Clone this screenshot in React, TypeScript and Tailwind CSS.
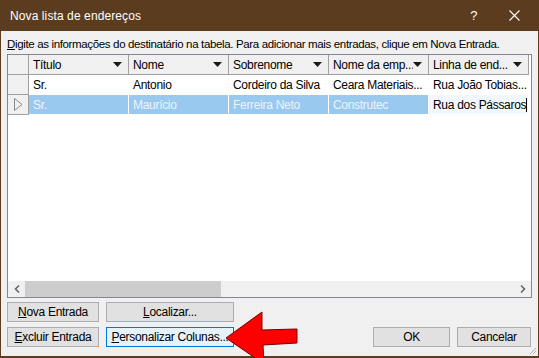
import React from "react";

const cols = [
  "Título",
  "Nome",
  "Sobrenome",
  "Nome da emp...",
  "Linha de end...",
];

const rows = [
  ["Sr.", "Antonio", "Cordeiro da Silva", "Ceara Materiais...", "Rua João Tobias..."],
  ["Sr.", "Maurício", "Ferreira Neto", "Construtec", "Rua dos Pássaros"],
];

function DownArrow() {
  return (
    <svg width="9" height="5" viewBox="0 0 9 5" className="shrink-0">
      <polygon points="0,0 9,0 4.5,5" fill="#1a1a1a" />
    </svg>
  );
}

function Btn({
  label,
  u,
  className = "",
  focused = false,
}: {
  label: string;
  u: number;
  className?: string;
  focused?: boolean;
}) {
  return (
    <button
      type="button"
      className={
        "h-[20px] flex items-center justify-center border text-[12px] tracking-[-0.3px] text-black leading-none whitespace-nowrap " +
        (focused ? "border-[#0078d7] bg-[#e5f1fb] " : "border-[#adadad] bg-[#e1e1e1] ") +
        className
      }
    >
      {u >= 0 ? (
        <span>
          {label.slice(0, u)}
          <span className="underline">{label[u]}</span>
          {label.slice(u + 1)}
        </span>
      ) : (
        label
      )}
    </button>
  );
}

export default function App() {
  return (
    <div className="relative w-[539px] h-[358px] bg-[#5b3c1e] flex flex-col font-['Liberation_Sans',Arial,sans-serif] overflow-hidden">
      {/* title bar */}
      <div className="h-[31px] flex items-center text-white text-[12px] tracking-[0.1px] pl-[10px] shrink-0">
        <span className="flex-1">Nova lista de endereços</span>
        <span className="w-[20px] text-center text-[13px] mr-[25px]">?</span>
        <svg width="11" height="11" viewBox="0 0 11 11" className="mr-[19px]">
          <path d="M0.5 0.5 L10.5 10.5 M10.5 0.5 L0.5 10.5" stroke="#fff" strokeWidth="1.1" />
        </svg>
      </div>

      {/* client area */}
      <div className="flex-1 mx-[1px] mb-[2px] bg-[#f0f0f0] flex flex-col pl-[6px] text-[12px] tracking-[-0.3px] text-black">
        <div className="h-[23px] pt-[6px] leading-[14px] text-[11.5px] tracking-[-0.35px] whitespace-nowrap">
          <span className="underline">D</span>igite as informações do destinatário na tabela. Para adicionar mais entradas, clique em Nova Entrada.
        </div>

        {/* grid */}
        <div className="w-[525px] h-[244px] border border-[#828790] bg-white flex flex-col">
          <div className="flex h-[20px] shrink-0">
            <div className="w-[21px] bg-[#f0f0f0] border-r border-b border-[#a0a0a0]" />
            {cols.map((c) => (
              <div
                key={c}
                className="w-[100px] bg-[#f0f0f0] border-r border-b border-[#a0a0a0] flex items-center pl-[4px] pr-[6px]"
              >
                <span className="flex-1 whitespace-nowrap overflow-hidden">{c}</span>
                <DownArrow />
              </div>
            ))}
          </div>

          {rows.map((r, i) => {
            const sel = i === 1;
            return (
              <div key={i} className="flex h-[20px] shrink-0">
                <div className="w-[21px] bg-[#f0f0f0] border-r border-b border-[#a0a0a0] flex items-center justify-center">
                  {sel && (
                    <svg width="9" height="13" viewBox="0 0 9 13">
                      <polygon points="0.5,0.5 8,6.5 0.5,12.5" fill="none" stroke="#8a8a8a" />
                    </svg>
                  )}
                </div>
                {r.map((v, j) => {
                  const editing = sel && j === 4;
                  return (
                    <div
                      key={j}
                      className={
                        "w-[100px] border-r border-b border-white flex items-center pl-[4px] whitespace-nowrap overflow-hidden " +
                        (editing
                          ? "bg-[#f1f7fd] text-black"
                          : sel
                          ? "bg-[#99c9ef] text-[#eef3f8]"
                          : "bg-white text-black")
                      }
                    >
                      {v}
                      {editing && <span className="inline-block w-[1px] h-[14px] bg-black" />}
                    </div>
                  );
                })}
              </div>
            );
          })}

          <div className="flex-1" />

          {/* horizontal scrollbar */}
          <div className="h-[16px] bg-[#f0f0f0] flex items-center shrink-0">
            <div className="w-[17px] flex items-center justify-center">
              <svg width="6" height="8" viewBox="0 0 6 8">
                <path d="M5 0.5 L1.5 4 L5 7.5" fill="none" stroke="#606060" strokeWidth="1.5" />
              </svg>
            </div>
            <div className="w-[196px] h-full bg-[#cdcdcd]" />
            <div className="flex-1" />
            <div className="w-[17px] flex items-center justify-center">
              <svg width="6" height="8" viewBox="0 0 6 8">
                <path d="M1 0.5 L4.5 4 L1 7.5" fill="none" stroke="#606060" strokeWidth="1.5" />
              </svg>
            </div>
          </div>
        </div>

        {/* buttons */}
        <div className="flex gap-[7px] mt-[4px]">
          <Btn label="Nova Entrada" u={0} className="w-[92px]" />
          <Btn label="Localizar..." u={0} className="w-[128px]" />
        </div>
        <div className="flex mt-[5px]">
          <Btn label="Excluir Entrada" u={0} className="w-[92px]" />
          <Btn label="Personalizar Colunas..." u={0} focused className="w-[128px] ml-[7px]" />
          <div className="flex-1" />
          <Btn label="OK" u={-1} className="w-[77px]" />
          <Btn label="Cancelar" u={-1} className="w-[74px] ml-[7px] mr-[7px]" />
        </div>
      </div>

      {/* red arrow */}
      <svg
        className="absolute left-0 top-0 pointer-events-none"
        width="539"
        height="358"
        viewBox="0 0 539 358"
      >
        <polygon
          points="226,338 262,312 262,330 297,329 297,343 263,345 264,364"
          fill="#ff0000"
          stroke="#7a0000"
          strokeWidth="1"
          strokeLinejoin="round"
        />
      </svg>

      {/* resize grip */}
      <svg className="absolute right-[2px] bottom-[3px]" width="10" height="10" viewBox="0 0 10 10">
        <path d="M9 3 L3 9 M9 6 L6 9" stroke="#b0b0b0" strokeWidth="1" />
      </svg>
    </div>
  );
}
